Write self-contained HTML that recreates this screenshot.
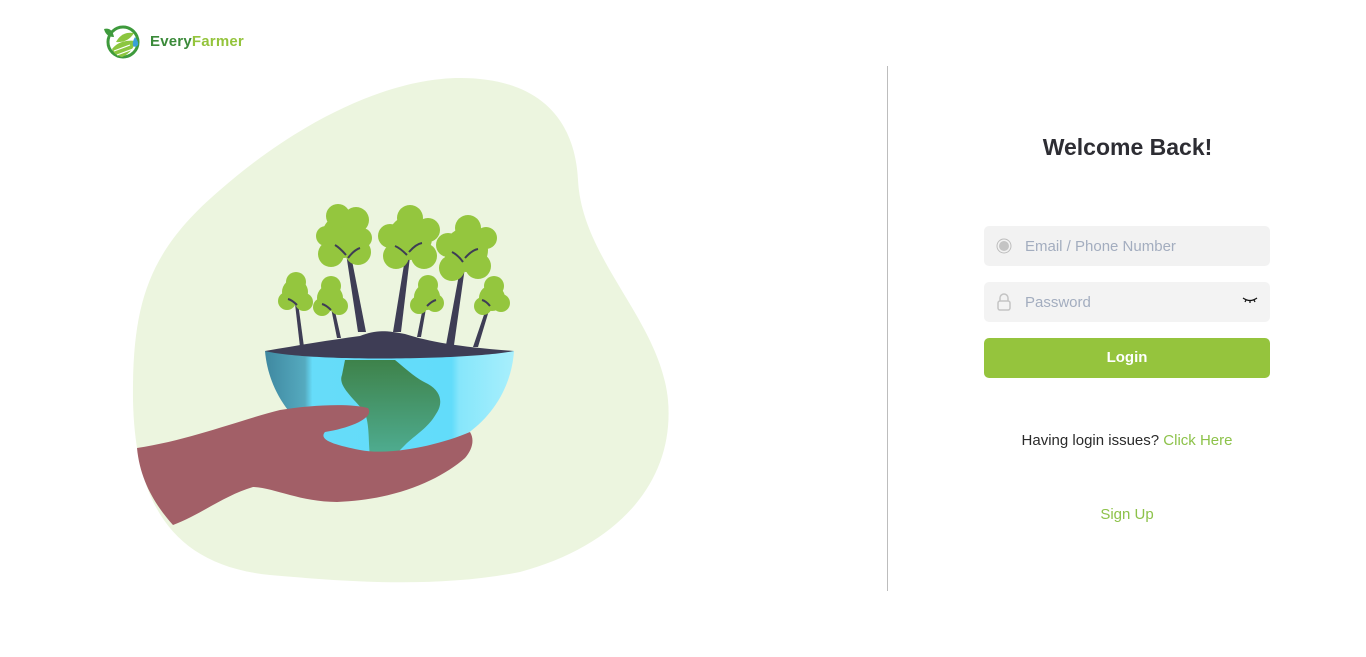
<!DOCTYPE html>
<html><head><meta charset="utf-8"><style>
html,body{margin:0;padding:0;width:1366px;height:657px;background:#fff;overflow:hidden;font-family:"Liberation Sans",sans-serif;}
.abs{position:absolute}
.logo{left:150px;top:33px;font-size:15px;font-weight:bold;color:#3b8a3a;letter-spacing:0.2px}
.logo span{color:#94c43c}
.divider{left:887px;top:66px;width:1px;height:525px;background:#bdbdbd}
h1{position:absolute;left:985px;width:285px;top:134px;margin:0;text-align:center;font-size:23px;font-weight:bold;color:#2d2d33}
.inp{left:984px;width:286px;height:40px;background:#f2f2f2;border-radius:5px}
.ph{position:absolute;left:41px;top:12px;font-size:15px;color:#a3adbf}
.btn{left:984px;top:338px;width:286px;height:40px;background:#95c43d;border-radius:5px;color:#fff;font-weight:bold;font-size:15px;text-align:center;line-height:40px}
.t{font-size:15px;color:#2a2a2a;text-align:center;width:286px;left:984px}
.g{color:#8dc24a}
</style></head><body>
<svg class="abs" style="left:100px;top:23px" width="42" height="38" viewBox="0 0 42 38">
<circle cx="23" cy="19" r="15" fill="none" stroke="#3e9a3c" stroke-width="3"/>
<path d="M12 26 Q20 16 36 18 Q32 30 22 34 Q14 32 12 26Z" fill="#8cc63f"/>
<path d="M14 28 L30 22 M17 32 L33 26" stroke="#fff" stroke-width="1.2"/>
<path d="M16 19 Q22 8 34 10 Q28 20 16 19Z" fill="#8cc63f"/>
<path d="M4 6 Q12 4 14 14 Q6 14 4 6Z" fill="#3e9a3c"/>
<path d="M35 14 Q39 19 38 22 Q36 25 33 23 Q32 19 35 14Z" fill="#3aa0d8"/>
</svg>
<div class="abs logo">Every<span>Farmer</span></div>

<svg class="abs" style="left:0;top:0" width="880" height="657" viewBox="0 0 880 657">
<defs>
<linearGradient id="bowl" x1="0" x2="1" y1="0" y2="0">
<stop offset="0" stop-color="#3f88a0"/><stop offset="0.16" stop-color="#55aabf"/><stop offset="0.19" stop-color="#66dcf9"/><stop offset="0.75" stop-color="#62dcfa"/><stop offset="0.78" stop-color="#86e6fb"/><stop offset="1" stop-color="#a8effc"/></linearGradient>
<linearGradient id="land" x1="0" x2="0" y1="0" y2="1"><stop offset="0" stop-color="#3e824a"/><stop offset="1" stop-color="#4fad92"/></linearGradient>
</defs>
<path d="M460 78 C540 78 575 120 578 180 C582 260 660 320 668 400 C675 480 620 545 520 572 C430 590 330 580 270 575 C170 565 135 500 133 400 C132 300 150 250 220 190 C300 120 390 78 460 78Z" fill="#ecf5df"/>
<path d="M265 351 L514 351 C510 410 460 457 390 457 C320 457 270 410 265 351Z" fill="url(#bowl)"/>
<path d="M345 360 L395 360 C405 368 415 378 428 384 C442 392 443 404 436 414 C428 428 415 435 405 445 L398 452 L370 456 C368 440 370 420 363 410 C350 395 338 385 342 375Z" fill="url(#land)"/>
<path d="M265 351 C300 345 330 340 360 336 C375 330 385 330 405 334 C430 342 460 347 514 351 C470 360 310 362 265 351Z" fill="#3e3d55"/>
<g fill="#3e3d55">
<path d="M300 347 L294 295 L297 295 L304 347Z"/><path d="M337 338 L329 298 L332 298 L341 338Z"/>
<path d="M358 332 L344 240 L348 240 L366 332Z"/><path d="M393 332 L408 240 L412 240 L401 332Z"/>
<path d="M417 337 L425 297 L428 297 L421 337Z"/><path d="M446 345 L463 253 L467 253 L454 345Z"/>
<path d="M473 347 L490 297 L493 297 L478 347Z"/>
</g>
<g fill="#94c63e">
<circle cx="295" cy="292" r="13"/><circle cx="287" cy="301" r="9"/><circle cx="304" cy="302" r="9"/><circle cx="296" cy="282" r="10"/>
<circle cx="330" cy="298" r="13"/><circle cx="322" cy="307" r="9"/><circle cx="339" cy="306" r="9"/><circle cx="331" cy="286" r="10"/>
<circle cx="344" cy="236" r="22"/><circle cx="331" cy="254" r="13"/><circle cx="358" cy="252" r="13"/><circle cx="338" cy="216" r="12"/><circle cx="356" cy="220" r="13"/><circle cx="326" cy="236" r="10"/><circle cx="362" cy="238" r="10"/>
<circle cx="410" cy="238" r="22"/><circle cx="396" cy="256" r="13"/><circle cx="424" cy="256" r="13"/><circle cx="410" cy="218" r="13"/><circle cx="428" cy="230" r="12"/><circle cx="390" cy="236" r="12"/>
<circle cx="427" cy="297" r="13"/><circle cx="419" cy="305" r="9"/><circle cx="435" cy="303" r="9"/><circle cx="428" cy="285" r="10"/>
<circle cx="466" cy="250" r="22"/><circle cx="452" cy="268" r="13"/><circle cx="478" cy="266" r="13"/><circle cx="468" cy="228" r="13"/><circle cx="486" cy="238" r="11"/><circle cx="448" cy="245" r="12"/>
<circle cx="492" cy="298" r="13"/><circle cx="483" cy="306" r="9"/><circle cx="501" cy="303" r="9"/><circle cx="494" cy="286" r="10"/>
</g>
<g stroke="#3e3d55" stroke-width="2" fill="none">
<path d="M346 255 Q340 248 335 245 M348 258 Q354 250 360 248"/><path d="M407 255 Q400 248 395 246 M409 252 Q416 244 422 243"/>
<path d="M463 262 Q458 255 452 252 M465 258 Q472 250 478 249"/>
<path d="M297 305 Q292 300 288 299 M331 310 Q326 305 322 304 M427 306 Q432 301 436 300 M490 306 Q486 301 482 300"/>
</g>
<path d="M137 448 C190 440 240 420 280 410 C310 405 350 403 368 408 C375 418 350 428 325 432 C318 440 335 445 360 450 C390 456 440 445 470 432 C475 440 472 450 465 458 C440 480 395 500 337 502 C300 502 275 488 253 487 C225 495 200 515 173 525 C155 505 140 480 137 448Z" fill="#a25f67"/>
</svg>

<div class="abs divider"></div>
<h1>Welcome Back!</h1>
<div class="abs inp" style="top:226px">
<svg class="abs" style="left:12px;top:12px" width="16" height="16"><circle cx="8" cy="8" r="7" fill="none" stroke="#bdbdbd" stroke-width="1"/><circle cx="8" cy="8" r="5" fill="#c4c4c4"/></svg>
<div class="ph">Email / Phone Number</div></div>
<div class="abs inp" style="top:282px;background:#f3f3f3">
<svg class="abs" style="left:13px;top:11px" width="14" height="18"><path d="M3 8 V5 a4 4 0 0 1 8 0 V8" fill="none" stroke="#c4c4c4" stroke-width="1.5"/><rect x="1" y="8" width="12" height="9" rx="2" fill="none" stroke="#c4c4c4" stroke-width="1.5"/></svg>
<div class="ph">Password</div>
<svg class="abs" style="left:258px;top:14px" width="16" height="8"><path d="M1 2 Q8 7 15 2 M4 4 L3 6 M8 5 V7 M12 4 L13 6" stroke="#111" stroke-width="1.2" fill="none"/></svg>
</div>
<div class="abs btn">Login</div>
<div class="abs t" style="top:432px">Having login issues? <span class="g">Click Here</span></div>
<div class="abs t g" style="top:506px">Sign Up</div>
</body></html>
